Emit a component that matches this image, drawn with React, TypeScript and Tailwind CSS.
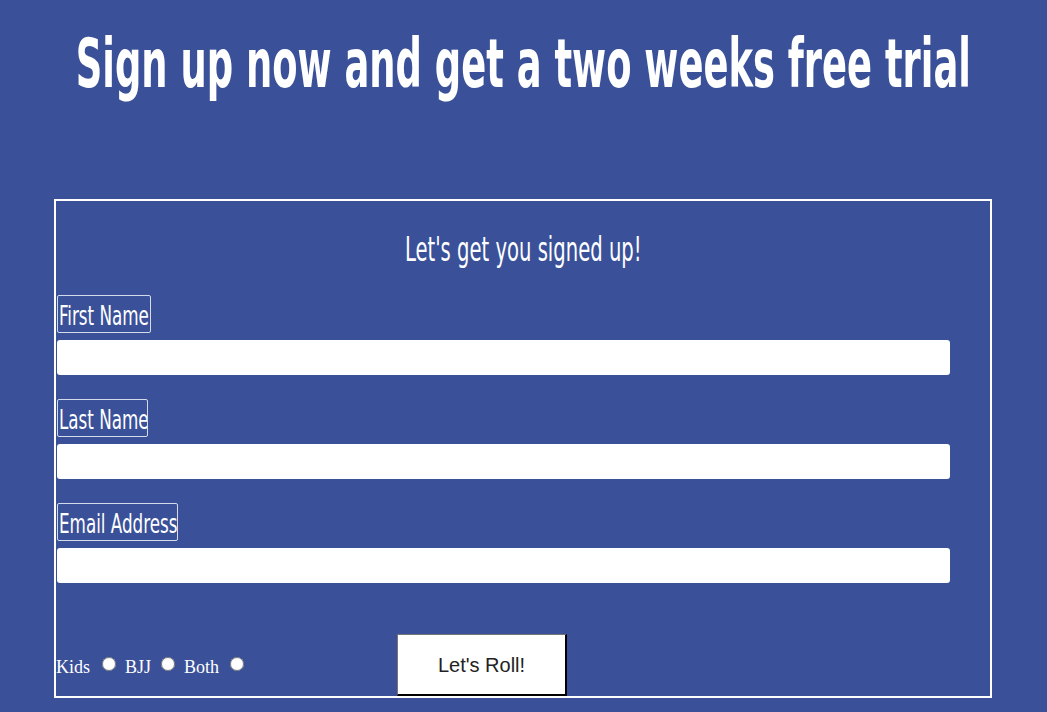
const cond = { fontFamily: '"DejaVu Sans Condensed", "DejaVu Sans", sans-serif' };

const fields = [
  { label: 'First Name', w: 'w-[94px]' },
  { label: 'Last Name', w: 'w-[91px]' },
  { label: 'Email Address', w: 'w-[121px]' },
];

export default function App() {
  return (
    <div className="min-h-[712px] w-full overflow-hidden bg-[#3a5199] text-white">
      <div className="flex h-[199px] justify-center pt-[24px]">
        <h1 className="whitespace-nowrap text-[68px] leading-[80px] font-bold" style={cond}>
          <span className="inline-block origin-center scale-x-[0.603]">
            Sign up now and get a two weeks free trial
          </span>
        </h1>
      </div>
      <form className="mx-[54px] flex h-[499px] w-[938px] flex-col border-2 border-white">
        <p className="mt-[29px] flex justify-center whitespace-nowrap text-[33px] leading-[40px]" style={cond}>
          <span className="inline-block origin-center scale-x-[0.66]">Let's get you signed up!</span>
        </p>
        {fields.map((f, i) => (
          <div key={f.label} className={`flex flex-col ${i === 0 ? 'mt-[25px]' : 'mt-[24px]'}`}>
            <label
              className={`ml-px h-[38px] ${f.w} overflow-hidden whitespace-nowrap rounded-[2px] border border-[#d5dbe9] pl-px pt-[3px] text-[27px] leading-[33px]`}
              style={cond}
            >
              <span className="inline-block origin-left scale-x-[0.69]">{f.label}</span>
            </label>
            <input type="text" className="ml-px mt-[7px] h-[35px] w-[893px] rounded-[3px] bg-white" />
          </div>
        ))}
        <div className="mt-auto flex items-end">
          <div
            className="mb-[20px] flex w-[341px] items-end text-[18px] leading-[18px]"
            style={{ fontFamily: '"Liberation Serif", "Times New Roman", serif' }}
          >
            <span>Kids</span>
            <input type="radio" name="prog" className="mb-[5px] ml-[12px] h-[14px] w-[14px]" />
            <span className="ml-[9px]">BJJ</span>
            <input type="radio" name="prog" className="mb-[5px] ml-[10px] h-[14px] w-[14px]" />
            <span className="ml-[9px]">Both</span>
            <input type="radio" name="prog" className="mb-[5px] ml-[11px] h-[14px] w-[14px]" />
          </div>
          <button
            type="button"
            className="h-[62px] w-[170px] border-t border-l border-r-2 border-b-2 border-t-[#767676] border-l-[#767676] border-r-black border-b-black bg-white text-[20px] text-[#222]"
            style={{ fontFamily: '"Liberation Sans", Arial, sans-serif' }}
          >
            Let's Roll!
          </button>
        </div>
      </form>
    </div>
  );
}
